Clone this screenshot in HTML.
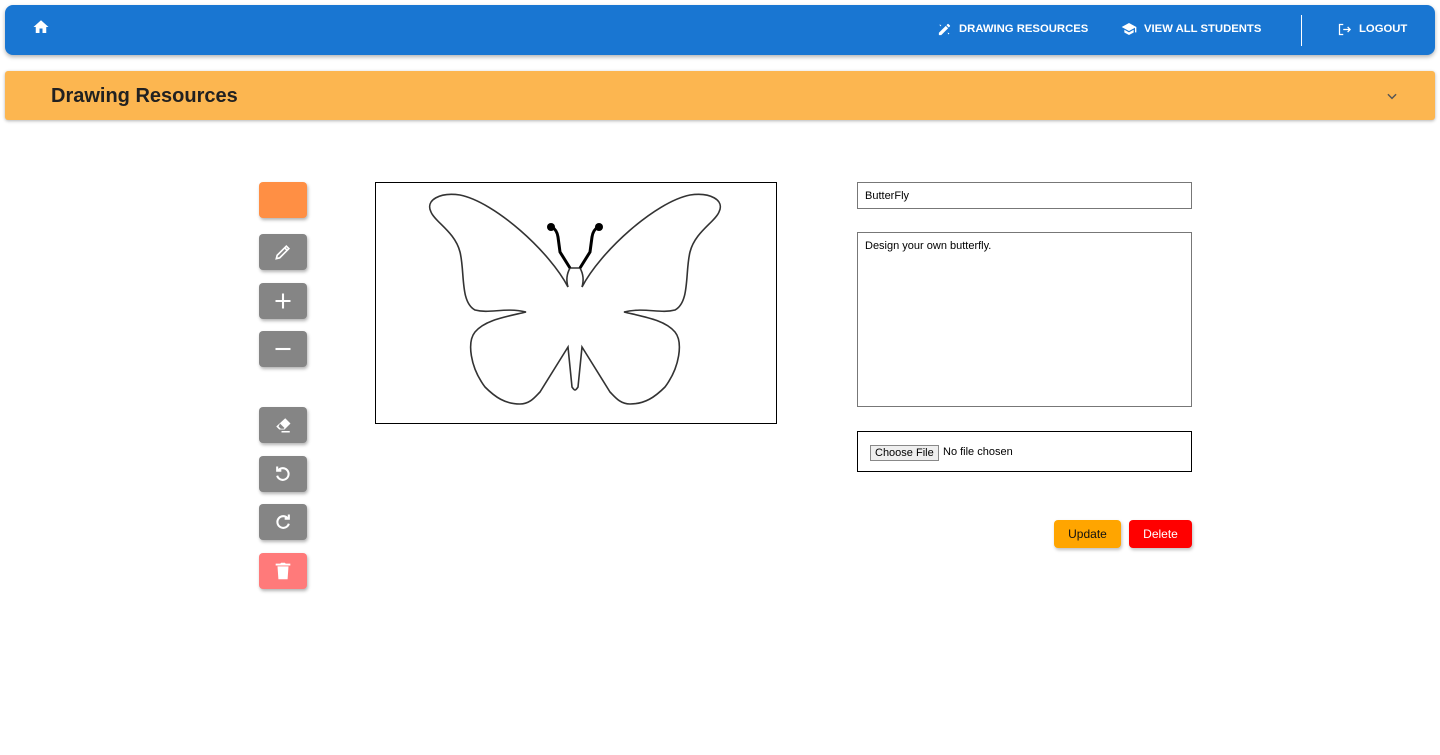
<!DOCTYPE html>
<html><head><meta charset="utf-8"><style>
*{box-sizing:border-box}
body{margin:0;width:1440px;height:755px;background:#fff;font-family:"Liberation Sans",Arial,sans-serif;position:relative;overflow:hidden}
.nav{position:absolute;left:5px;top:5px;width:1430px;height:50px;background:#1976d2;border-radius:8px;box-shadow:0 2px 4px rgba(0,0,0,.3)}
.ni{position:absolute;top:0;height:48px;display:flex;align-items:center;color:#fff;font-weight:bold;font-size:11.3px;letter-spacing:0}
.ni svg{margin-right:7px}
.bar{position:absolute;left:5px;top:71px;width:1430px;height:49px;background:#fcb650;box-shadow:0 1px 3px rgba(0,0,0,.3);border-radius:3px}
.bar span{position:absolute;left:46px;top:14px;font-size:20px;font-weight:bold;color:#212121}
.tb{position:absolute;left:259px;width:48px;height:36px;border-radius:4px;background:#858585;box-shadow:1px 2px 3px rgba(0,0,0,.3);display:flex;align-items:center;justify-content:center}
.box{position:absolute;border:1px solid #333;background:#fff}
.btn{position:absolute;top:520px;height:28px;border-radius:4px;font-size:12px;display:flex;align-items:center;justify-content:center;box-shadow:1px 2px 3px rgba(0,0,0,.25)}
</style></head><body>
<div class="nav">
 <svg style="position:absolute;left:27px;top:13px" width="18" height="18" viewBox="0 0 24 24"><path fill="#fff" d="M10 20v-6h4v6h5v-8h3L12 3 2 12h3v8z"/></svg>
 <div class="ni" style="left:932px"><svg width="15" height="15" viewBox="0 0 24 24"><path fill="#fff" d="M3 17.25V21h3.75L17.8 9.94l-3.75-3.75zM20.7 7.04a1 1 0 000-1.41l-2.34-2.34a1 1 0 00-1.41 0l-1.83 1.83 3.75 3.75zM4 4l3 1-2 2zM17 17l3 1-2 2z"/></svg>DRAWING RESOURCES</div>
 <div class="ni" style="left:1116px"><svg width="16" height="16" viewBox="0 0 24 24"><path fill="#fff" d="M5 13.18v4L12 21l7-3.82v-4L12 17zM12 3L1 9l11 6 9-4.91V17h2V9z"/></svg>VIEW ALL STUDENTS</div>
 <div style="position:absolute;left:1296px;top:10px;width:1px;height:31px;background:#fff"></div>
 <div class="ni" style="left:1332px"><svg width="15" height="15" viewBox="0 0 24 24"><path fill="none" stroke="#fff" stroke-width="2" d="M10 4H4v16h6M10 12h11M17 8l4 4-4 4"/></svg>LOGOUT</div>
</div>
<div class="bar"><span>Drawing Resources</span>
 <svg style="position:absolute;left:1380px;top:18px" width="14" height="14" viewBox="0 0 24 24"><path fill="none" stroke="#555" stroke-width="2.5" d="M5 9l7 7 7-7"/></svg></div>

<div class="tb" style="top:182px;background:#ff8f44"></div>
<div class="tb" style="top:234px"><svg width="20" height="20" viewBox="0 0 24 24"><path fill="none" stroke="#fff" stroke-width="2" d="M4 20l1-4L16 5l3 3L8 19zM14 7l3 3"/></svg></div>
<div class="tb" style="top:283px"><svg width="20" height="20" viewBox="0 0 24 24"><path stroke="#fff" stroke-width="2.5" d="M12 3v18M3 12h18"/></svg></div>
<div class="tb" style="top:331px"><svg width="20" height="20" viewBox="0 0 24 24"><path stroke="#fff" stroke-width="2.5" d="M3 12h18"/></svg></div>
<div class="tb" style="top:407px"><svg width="18" height="18" viewBox="0 0 24 24"><path fill="#fff" d="M15 3l7 7-8 8H7l-4-4zM6 14l3 3h4l1-1-6-6zM10 20h11v2H10z"/></svg></div>
<div class="tb" style="top:456px"><svg width="20" height="20" viewBox="0 0 24 24"><path fill="none" stroke="#fff" stroke-width="2.5" d="M6 8a7 7 0 11-1 6M5 3v5h5"/></svg></div>
<div class="tb" style="top:504px"><svg width="20" height="20" viewBox="0 0 24 24"><path fill="none" stroke="#fff" stroke-width="2.5" d="M18 8a7 7 0 101 6M19 3v5h-5"/></svg></div>
<div class="tb" style="top:553px;background:#ff7a7a"><svg width="22" height="22" viewBox="0 0 24 24"><path fill="#fff" d="M6 7h12l-1 14H7zM4 4h5l1-1h4l1 1h5v2H4z"/></svg></div>

<div class="box" style="left:375px;top:182px;width:402px;height:242px;border-color:#000">
<svg width="400" height="240" viewBox="1 1 400 240">
<g id="h" fill="none" stroke="#333" stroke-width="1.6">
<path d="M193,105 C175,70 120,20 85,13 C65,10 50,18 56,30 C60,40 80,50 85,70 C90,90 85,120 100,128 C115,132 130,125 151,130 C130,135 110,138 100,150 C92,160 95,185 110,205 C120,215 130,222 145,222 C155,222 160,215 165,210 L193,165 L197,205 Q199,208 200,208"/>
<path d="M193,105 Q190,95 195,86 L200,86"/>
<path d="M195,86 L185,70 L183,55 Q182,48 177,45" stroke="#000" stroke-width="3"/>
<circle cx="176" cy="45" r="4" fill="#000" stroke="none"/>
</g>
<use href="#h" transform="translate(400,0) scale(-1,1)"/>
</svg></div>

<div class="box" style="left:857px;top:182px;width:335px;height:27px;border-color:#777;font-size:11px;padding:7px 7px">ButterFly</div>
<div class="box" style="left:857px;top:232px;width:335px;height:175px;border-color:#777;font-size:11px;padding:7px 7px">Design your own butterfly.</div>
<div class="box" style="left:857px;top:431px;width:335px;height:41px;border-color:#000;font-size:11px">
 <span style="position:absolute;left:12px;top:13px;border:1px solid #888;background:#efefef;padding:1px 4px;font-size:11px">Choose File</span>
 <span style="position:absolute;left:85px;top:14px">No file chosen</span></div>
<div class="btn" style="left:1054px;width:67px;background:#ffa500;color:#111">Update</div>
<div class="btn" style="left:1129px;width:63px;background:#ff0000;color:#fff">Delete</div>
</body></html>
